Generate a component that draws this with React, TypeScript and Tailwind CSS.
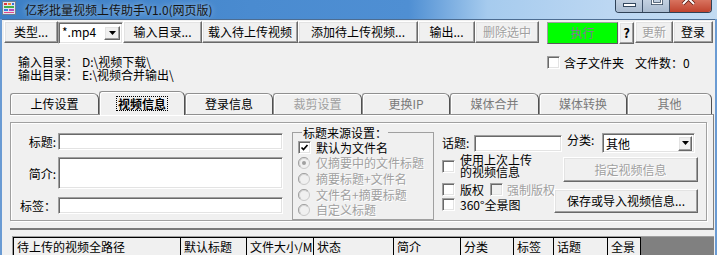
import type { ReactNode } from "react";

const raised =
  "bg-[#f0f0f0] border border-t-white border-l-white border-r-[#696969] border-b-[#696969] shadow-[inset_-1px_-1px_0_#a0a0a0,inset_1px_1px_0_#e3e3e3]";
const sunken =
  "bg-white border border-t-[#a0a0a0] border-l-[#a0a0a0] border-r-white border-b-white shadow-[inset_1px_1px_0_#696969,inset_-1px_-1px_0_#e3e3e3]";
const dim = "text-[#a0a0a0] [text-shadow:1px_1px_0_#fff]";

function Btn({ className, children }: { className: string; children: ReactNode }) {
  return (
    <div className={`${raised} h-[22px] shrink-0 flex items-center justify-center whitespace-nowrap ${className}`}>
      {children}
    </div>
  );
}

function DropArrow({ className }: { className: string }) {
  return (
    <div className={`${raised} shrink-0 flex items-center justify-center ${className}`}>
      <svg width="7" height="4" viewBox="0 0 7 4">
        <polygon points="0,0 7,0 3.5,4" fill="#000" />
      </svg>
    </div>
  );
}

function Check({ checked, disabled }: { checked?: boolean; disabled?: boolean }) {
  return (
    <span
      className={`w-[13px] h-[13px] shrink-0 flex items-center justify-center border border-t-[#a0a0a0] border-l-[#a0a0a0] border-r-white border-b-white shadow-[inset_1px_1px_0_#696969,inset_-1px_-1px_0_#e3e3e3] ${
        disabled ? "bg-[#f0f0f0]" : "bg-white"
      }`}
    >
      {checked && (
        <svg width="9" height="9" viewBox="0 0 9 9">
          <polyline points="1.5,4.5 3.5,6.5 7.5,2" fill="none" stroke="#000" strokeWidth="1.7" />
        </svg>
      )}
    </span>
  );
}

function Radio({ on }: { on?: boolean }) {
  return (
    <svg width="12" height="12" viewBox="0 0 12 12" className="shrink-0">
      <circle cx="6" cy="6" r="5.5" fill="#f0f0f0" stroke="#c8c8c8" strokeWidth="1" />
      <path d="M2.1 9.9 A5.5 5.5 0 0 1 9.9 2.1" fill="none" stroke="#a0a0a0" strokeWidth="1" />
      <path d="M2.8 9.2 A4.5 4.5 0 0 1 9.2 2.8" fill="none" stroke="#d4d4d4" strokeWidth="1" />
      {on && <circle cx="6" cy="6" r="2" fill="#a0a0a0" />}
    </svg>
  );
}

function AppIcon() {
  return (
    <svg width="14" height="14" viewBox="0 0 14 14" className="ml-[2px] mt-[1px] shrink-0">
      <rect x="0.5" y="0.5" width="13" height="13" fill="#dfe6ee" stroke="#6d7f93" />
      <rect x="2" y="2" width="3" height="2" fill="#e2383a" />
      <rect x="6" y="2" width="3" height="2" fill="#f28a2e" />
      <rect x="10" y="2" width="2" height="2" fill="#3b6fd8" />
      <rect x="2" y="5" width="10" height="2" fill="#42b04a" />
      <rect x="2" y="8" width="4" height="2" fill="#2f7fe0" />
      <rect x="7" y="8" width="5" height="2" fill="#b04ac0" />
      <rect x="2" y="11" width="10" height="1" fill="#e24a8a" />
    </svg>
  );
}

function TitleBar() {
  return (
    <div className="h-[19px] shrink-0 flex items-start bg-[linear-gradient(90deg,#3c7fc5_0%,#4a8bd0_35%,#4f8fd3_57%,#a6cbee_68%,#bcd7f2_85%,#c2dbf2_100%)]">
      <AppIcon />
      <span className="ml-[9px] mt-[3px] text-[12px] leading-[13px] text-[#141414] whitespace-nowrap [text-shadow:0_0_6px_rgba(255,255,255,0.65)]">
        亿彩批量视频上传助手V1.0(网页版)
      </span>
      <div className="ml-auto mr-[5px] flex h-[13px] rounded-b-[4px] overflow-hidden border border-t-0 border-[#2f4257]">
        <div className="w-[27px] h-full bg-[linear-gradient(180deg,#c3d1e1,#a9bbd0)] border-r border-[#3d5068]">
          <svg width="27" height="12" viewBox="0 0 27 12">
            <rect x="7.5" y="3.5" width="12" height="3" fill="#fff" stroke="#33475d" />
          </svg>
        </div>
        <div className="w-[27px] h-full bg-[linear-gradient(180deg,#c3d1e1,#a9bbd0)] border-r border-[#3d5068]">
          <svg width="27" height="12" viewBox="0 0 27 12">
            <rect x="9.5" y="-5.5" width="9" height="9" fill="none" stroke="#33475d" strokeWidth="3" />
            <rect x="9.5" y="-5.5" width="9" height="9" fill="none" stroke="#fff" strokeWidth="1.4" />
          </svg>
        </div>
        <div className="w-[41px] h-full bg-[linear-gradient(180deg,#d8735f,#c0432e)]">
          <svg width="41" height="12" viewBox="0 0 41 12">
            <path d="M13 -7 L24 4 M24 -7 L13 4" stroke="#5a1a12" strokeWidth="3.6" />
            <path d="M13 -7 L24 4 M24 -7 L13 4" stroke="#fff" strokeWidth="2" />
          </svg>
        </div>
      </div>
    </div>
  );
}

function Toolbar() {
  return (
    <div className="h-[24px] shrink-0 flex items-start pl-[2px] pt-[1px]">
      <Btn className="w-[54px]">类型...</Btn>
      <div className={`${sunken} w-[65px] h-[22px] mt-[1px] shrink-0 flex items-start justify-between pl-[3px] pr-[2px] pt-[2px]`}>
        <span className="leading-[13px]">*.mp4</span>
        <DropArrow className="w-[16px] h-[14px] mt-[1px]" />
      </div>
      <Btn className="w-[79px]">输入目录...</Btn>
      <Btn className="w-[96px]">载入待上传视频</Btn>
      <Btn className="w-[120px]">添加待上传视频...</Btn>
      <Btn className="w-[57px]">输出...</Btn>
      <Btn className={`w-[64px] ${dim}`}>删除选中</Btn>
      <div className="w-[8px] shrink-0" />
      <div className="w-[71px] h-[22px] mt-[1px] shrink-0 flex items-center justify-center bg-[#00ff00] border border-t-[#a0a0a0] border-l-[#a0a0a0] border-r-[#5a5a5a] border-b-[#5a5a5a] text-[#86739a]">
        执行
      </div>
      <div className="w-[1px] shrink-0" />
      <div className={`${raised} w-[15px] h-[22px] mt-[1px] shrink-0 flex justify-center pt-[3px] font-bold text-[13px] leading-[13px]`}>
        ?
      </div>
      <div className="w-[1px] shrink-0" />
      <Btn className={`w-[38px] ${dim}`}>更新</Btn>
      <Btn className="w-[40px]">登录</Btn>
    </div>
  );
}

function InfoRows() {
  return (
    <div className="h-[47px] shrink-0 flex items-start pt-[11px]">
      <div className="w-[545px] shrink-0 pl-[16px] flex flex-col leading-[13px]">
        <div className="flex">
          <span className="w-[64px]">输入目录：</span>
          <span>D:\视频下载\</span>
        </div>
        <div className="flex">
          <span className="w-[64px]">输出目录：</span>
          <span>E:\视频合并输出\</span>
        </div>
      </div>
      <div className="flex items-center mt-[1px]">
        <Check />
        <span className="ml-[4px] leading-[13px]">含子文件夹</span>
        <span className="ml-[11px] leading-[13px]">文件数：0</span>
      </div>
    </div>
  );
}

const tabs = [
  { label: "上传设置", w: "w-[89px]", state: "normal" },
  { label: "视频信息", w: "w-[86px]", state: "active" },
  { label: "登录信息", w: "w-[88px]", state: "normal" },
  { label: "裁剪设置", w: "w-[89px]", state: "off" },
  { label: "更换IP", w: "w-[88px]", state: "grey" },
  { label: "媒体合并", w: "w-[89px]", state: "grey" },
  { label: "媒体转换", w: "w-[88px]", state: "grey" },
  { label: "其他", w: "w-[85px]", state: "grey" },
];

function TabStrip() {
  return (
    <div className="h-[23px] shrink-0 ml-[8px] flex items-end">
      {tabs.map((t) =>
        t.state === "active" ? (
          <div
            key={t.label}
            className={`${t.w} h-[24px] -mb-[1px] relative z-[1] shrink-0 flex items-center justify-center bg-[#f0f0f0] border border-b-0 border-t-[#909090] border-l-[#909090] border-r-[#505050] rounded-tl-[3px] rounded-tr-[6px] shadow-[inset_1px_1px_0_#fff]`}
          >
            <span className="font-bold leading-[13px] px-[1px] outline-dotted outline-1 outline-black">{t.label}</span>
          </div>
        ) : (
          <div
            key={t.label}
            className={`${t.w} h-[21px] shrink-0 flex items-center justify-center border border-b-0 border-t-[#909090] border-l-[#909090] border-r-[#505050] rounded-tl-[3px] rounded-tr-[6px] shadow-[inset_1px_1px_0_#fff] ${
              t.state === "normal" ? "text-black" : t.state === "off" ? "text-[#a0a0a0]" : "text-[#7a7a7a]"
            }`}
          >
            {t.label}
          </div>
        )
      )}
    </div>
  );
}

function FieldRow({ label, className, children }: { label: string; className: string; children?: ReactNode }) {
  return (
    <div className={`flex items-center ${className}`}>
      <span className="w-[45px] text-right leading-[13px]">{label}</span>
      {children}
    </div>
  );
}

function VideoInfo() {
  return (
    <div className="w-[697px] h-[99px] mt-[7px] shrink-0 flex border border-[#a0a0a0] shadow-[inset_1px_1px_0_#fff,1px_1px_0_#fff]">
      {/* title / summary / tags */}
      <div className="w-[272px] shrink-0 flex flex-col pt-[10px]">
        <FieldRow label="标题:" className="">
          <div className={`${sunken} ml-[2px] w-[225px] h-[17px]`} />
        </FieldRow>
        <FieldRow label="简介:" className="mt-[7px]">
          <div className={`${sunken} ml-[2px] w-[225px] h-[32px]`} />
        </FieldRow>
        <FieldRow label="标签：" className="mt-[8px]">
          <div className={`${sunken} ml-[2px] w-[225px] h-[17px]`} />
        </FieldRow>
      </div>

      <fieldset className="ml-[9px] mt-[3px] w-[142px] h-[94px] shrink-0 border border-[#a0a0a0] pl-[5px]">
        <legend className="ml-[4px] px-[1px] leading-[13px]">标题来源设置：</legend>
        <div className="flex items-center h-[13px] mt-[2px]">
          <Check checked />
          <span className="ml-[5px] leading-[13px]">默认为文件名</span>
        </div>
        <div className={`flex items-center h-[16px] mt-[1px] ${dim}`}>
          <Radio on />
          <span className="ml-[6px] whitespace-nowrap">仅摘要中的文件标题</span>
        </div>
        <div className={`flex items-center h-[16px] ${dim}`}>
          <Radio />
          <span className="ml-[6px] whitespace-nowrap">摘要标题+文件名</span>
        </div>
        <div className={`flex items-center h-[15px] ${dim}`}>
          <Radio />
          <span className="ml-[6px] whitespace-nowrap">文件名+摘要标题</span>
        </div>
        <div className={`flex items-center h-[15px] ${dim}`}>
          <Radio />
          <span className="ml-[6px] whitespace-nowrap">自定义标题</span>
        </div>
      </fieldset>

      <div className="ml-[8px] w-[256px] shrink-0 flex flex-col pt-[10px]">
        <div className="flex items-start h-[20px]">
          <span className="w-[32px] mt-[3px] leading-[13px]">话题:</span>
          <div className={`${sunken} w-[88px] h-[17px] mt-[2px]`} />
          <span className="ml-[5px] w-[35px] leading-[13px]">分类:</span>
          <div className={`${sunken} w-[93px] h-[20px] flex items-center justify-between pl-[3px] pr-[2px]`}>
            <span className="leading-[13px]">其他</span>
            <DropArrow className="w-[14px] h-[15px]" />
          </div>
        </div>
        <div className="flex">
          <div className="w-[112px] shrink-0 flex flex-col">
            <div className="flex items-center mt-[1px] h-[24px]">
              <Check />
              <div className="ml-[5px] flex flex-col">
                <span className="h-[12px] leading-[12px]">使用上次上传</span>
                <span className="h-[12px] leading-[12px]">的视频信息</span>
              </div>
            </div>
            <div className="flex items-center mt-[5px] h-[13px] whitespace-nowrap">
              <Check />
              <span className="ml-[5px]">版权</span>
              <span className="ml-[6px]">
                <Check disabled />
              </span>
              <span className={`ml-[4px] ${dim}`}>强制版权</span>
            </div>
            <div className="flex items-center mt-[2px] h-[13px] whitespace-nowrap">
              <Check />
              <span className="ml-[5px]">360°全景图</span>
            </div>
          </div>
          <div className="w-[144px] shrink-0 flex flex-col items-end">
            <div className={`${raised} w-[135px] h-[25px] mt-[4px] flex items-center justify-center ${dim}`}>指定视频信息</div>
            <div className={`${raised} w-[144px] h-[24px] mt-[7px] flex items-center justify-center`}>保存或导入视频信息...</div>
          </div>
        </div>
      </div>
    </div>
  );
}

const cols = [
  { label: "待上传的视频全路径", w: "w-[167px]" },
  { label: "默认标题", w: "w-[66px]" },
  { label: "文件大小/M", w: "w-[67px]" },
  { label: "状态", w: "w-[80px]" },
  { label: "简介", w: "w-[67px]" },
  { label: "分类", w: "w-[53px]" },
  { label: "标签", w: "w-[40px]" },
  { label: "话题", w: "w-[54px]" },
  { label: "全景", w: "w-[33px]" },
];

function ListHeader() {
  return (
    <div className="ml-[10px] mt-[6px] w-[702px] flex-1 border-t border-l border-[#a0a0a0] bg-[#808080]">
      <div className="flex h-[20px] border-t border-black w-fit border-r bg-[#f0f0f0]">
        {cols.map((c) => (
          <div key={c.label} className={`${c.w} shrink-0 border-l border-black pl-[3px] pt-[3px] leading-[12px] whitespace-nowrap overflow-hidden`}>
            {c.label}
          </div>
        ))}
      </div>
    </div>
  );
}

export default function App() {
  return (
    <div className="w-[717px] h-[255px] overflow-hidden flex flex-col bg-[#6a9bd3] font-['Noto_Sans_CJK_SC',sans-serif] text-[12px] leading-[12px] text-black">
      <TitleBar />
      <div className="flex-1 ml-[2px] mr-[2px] bg-[#f0f0f0] border-t border-[#4d6d92] flex flex-col">
        <Toolbar />
        <InfoRows />
        <TabStrip />
        <div className="ml-[8px] w-[704px] h-[116px] shrink-0 flex flex-col border-t border-t-[#909090] border-r border-r-[#808080] border-b-2 border-b-[#7a7a7a] shadow-[inset_0_1px_0_#fff]">
          <VideoInfo />
        </div>
        <ListHeader />
      </div>
    </div>
  );
}
